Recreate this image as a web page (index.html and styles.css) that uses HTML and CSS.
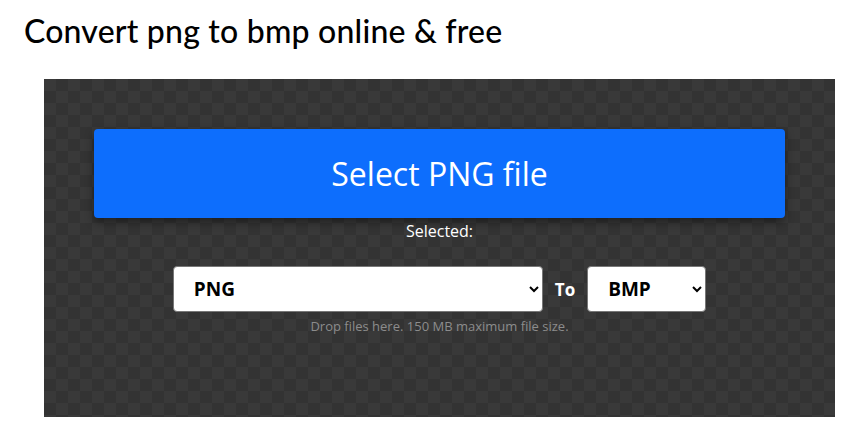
FILE: index.html
```html
<!DOCTYPE html>
<html>
<head>
    <meta charset="UTF-8">
    <title>Convert png to bmp</title>
    <link rel="stylesheet" href="styles.css">
</head>

<body>
    <h1 class="page-title">Convert png to bmp online &amp; free</h1>

    <div class="converter">
        <button class="select-btn">Select PNG file</button>
        <div class="selected">Selected:</div>

        <div class="format-row">
            <select class="format-select format-from">
                <option>PNG</option>
            </select>
            <span class="to-label">To</span>
            <select class="format-select format-to">
                <option>BMP</option>
            </select>
        </div>
        <div class="drop-hint">Drop files here. 150 MB maximum file size.</div>
    </div>
</body>

</html>
```

FILE: styles.css
```css
body {
    margin: 0;
    font-family: "Open Sans", Arial, sans-serif;
    background-color: #ffffff;
    color: black;
}

.page-title {
    margin: 0;
    padding: 11px 0 0 24px;
    height: 79px;
    box-sizing: border-box;
    font-family: Lato, "Open Sans", sans-serif;
    font-weight: 500;
    font-size: 32px;
    letter-spacing: 0.2px;
    color: #000;
}

/* Тъмен панел с шахматен фон */
.converter {
    margin: 0 10px 0 44px;
    height: 338px;
    box-sizing: border-box;
    padding: 50px 50px 0 50px;
    background-color: #393939;
    background-image:
        linear-gradient(45deg, #333333 25%, transparent 25%, transparent 75%, #333333 75%),
        linear-gradient(45deg, #333333 25%, transparent 25%, transparent 75%, #333333 75%);
    background-size: 24px 24px;
    background-position: 0 0, 12px 12px;
    text-align: center;
}

.select-btn {
    display: block;
    width: 100%;
    height: 89px;
    font-family: "Open Sans", sans-serif;
    font-size: 32px;
    color: white;
    background-color: #0d6efd;
    border: none;
    border-radius: 4px;
    box-shadow: 0 4px 10px rgba(0, 0, 0, 0.45);
    cursor: pointer;
}

.selected {
    margin-top: 2px;
    font-size: 16px;
    line-height: 22px;
    color: white;
}

.format-row {
    display: flex;
    justify-content: center;
    align-items: center;
    gap: 12px;
    margin-top: 24px;
}

.format-select {
    height: 46px;
    box-sizing: border-box;
    padding: 0 12px 0 16px;
    font-family: "Open Sans", sans-serif;
    font-size: 19px;
    font-weight: 700;
    color: #000;
    background-color: #fff;
    border: 1px solid #777;
    border-radius: 4px;
}

.format-from {
    width: 370px;
}

.format-to {
    width: 119px;
}

.to-label {
    font-size: 17px;
    font-weight: 700;
    color: white;
}

.drop-hint {
    margin-top: 5px;
    font-size: 13px;
    color: #8c8c8c;
}
```
